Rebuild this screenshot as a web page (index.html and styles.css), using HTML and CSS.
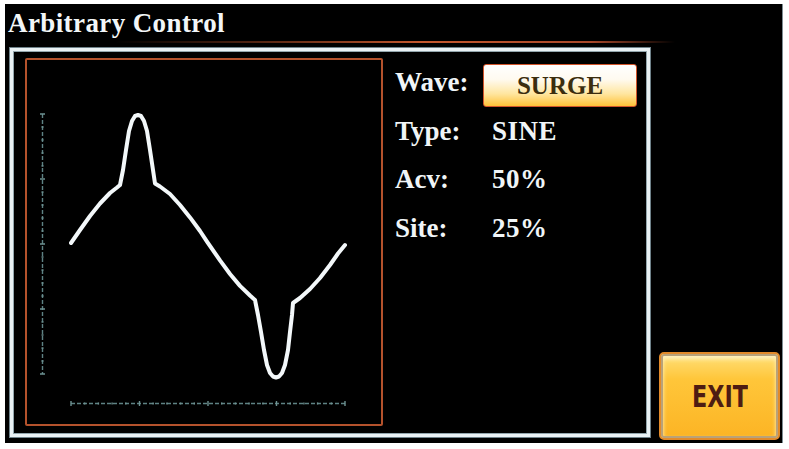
FILE: index.html
```html
<!DOCTYPE html>
<html>
<head>
<meta charset="utf-8">
<link rel="stylesheet" href="styles.css">
</head>
<body>
<div class="screen">
  <div class="title">Arbitrary Control</div>
  <div class="rule"></div>
  <div class="main">
    <div class="frame">
      <div class="graph">
        <svg class="plot" width="354" height="364" viewBox="27 60 354 364">
          <line x1="42.5" y1="114" x2="42.5" y2="374" class="axis" />
          <path class="ticks" d="M40,114h5M41.5,127h2M41.5,140h2M41.5,153h2M41.5,166h2M40,179h5M41.5,192h2M41.5,205h2M41.5,218h2M41.5,231h2M40,244h5M41.5,257h2M41.5,270h2M41.5,283h2M41.5,296h2M40,309h5M41.5,322h2M41.5,335h2M41.5,348h2M41.5,361h2M40,374h5" />
          <line x1="71" y1="403.5" x2="345" y2="403.5" class="axis" />
          <path class="ticks" d="M71,401v5M84.7,402.5v2M98.4,402.5v2M112.1,402.5v2M125.8,402.5v2M139.5,401v5M153.2,402.5v2M166.9,402.5v2M180.6,402.5v2M194.3,402.5v2M208,401v5M221.7,402.5v2M235.4,402.5v2M249.1,402.5v2M262.8,402.5v2M276.5,401v5M290.2,402.5v2M303.9,402.5v2M317.6,402.5v2M331.3,402.5v2M345,401v5" />
          <polyline class="wave" points="71,243 80,230 90,216 100,203.5 110,193 117,187.5 120,185 123,170 126,150 129,131 132,121 135,116 138,115 141,116 144,121 147,131 150,150 153,170 155,183.5 160,186.5 170,194 180,205 190,217.4 200,231 207,241.6 220,260.4 230,274 240,285.9 250,295.5 255,300 258,315 261,332 264,350 267,365 270,373 273,376.5 276,377.5 279,376.5 282,373 285,365 288,350 290,332 292,315 293,303 300,298 310,289 320,278 330,265 338,253.5 345,245" />
        </svg>
      </div>
      <div class="info">
        <div class="label">Wave:</div>
        <div class="btn-wave">SURGE</div>
        <div class="label">Type:</div>
        <div class="value">SINE</div>
        <div class="label">Acv:</div>
        <div class="value">50%</div>
        <div class="label">Site:</div>
        <div class="value">25%</div>
      </div>
    </div>
    <div class="exit"><span class="exit-text">EXIT</span></div>
  </div>
</div>
</body>
</html>
```
FILE: styles.css
```css
html, body {
  margin: 0;
  padding: 0;
  background: #ffffff;
}
.screen {
  margin: 4px 0 0 5px;
  width: 778px;
  height: 439px;
  background: #000000;
  box-sizing: border-box;
  border-right: 1px solid #7d8d93;
  display: flex;
  flex-direction: column;
}
.title {
  margin-top: 4px;
  padding-left: 3px;
  height: 30px;
  line-height: 30px;
  font-family: "Liberation Serif", serif;
  font-weight: bold;
  font-size: 27px;
  letter-spacing: 0.4px;
  color: #f2f6f8;
}
.rule {
  margin: 3px 0 0 110px;
  width: 560px;
  height: 2px;
  background: linear-gradient(90deg, rgba(180,80,40,0) 0%, rgba(180,80,40,0.45) 25%, #c4582e 55%, #a8482a 85%, rgba(160,70,40,0) 100%);
}
.main {
  margin-top: 5px;
  display: flex;
  align-items: flex-end;
  height: 392px;
}
.frame {
  margin-left: 5px;
  margin-bottom: 3px;
  width: 640px;
  height: 389px;
  box-sizing: border-box;
  border: 3px solid #e9f1f4;
  box-shadow: 0 0 0 1px #6f828a, inset 0 0 0 1px #93a6ad;
  padding: 7px 0 0 12px;
  display: flex;
  gap: 12px;
}
.graph {
  width: 358px;
  height: 368px;
  box-sizing: border-box;
  border: 2px solid #b4522c;
  border-radius: 2px;
}
.plot {
  display: block;
}
.axis {
  stroke: #5e8284;
  stroke-width: 1.4;
  stroke-dasharray: 4 2;
}
.ticks {
  stroke: #6e9292;
  stroke-width: 1.4;
  fill: none;
}
.wave {
  fill: none;
  stroke: #f3f8fa;
  stroke-width: 4;
  stroke-linejoin: round;
  stroke-linecap: round;
}
.info {
  display: grid;
  grid-template-columns: 88px 154px;
  grid-auto-rows: 48.7px;
  align-content: start;
  font-family: "Liberation Serif", serif;
  font-weight: bold;
  font-size: 27px;
  color: #f0f5f7;
}
.label, .value {
  line-height: 48.7px;
  white-space: nowrap;
}
.value {
  padding-left: 9px;
  letter-spacing: 0.5px;
}
.btn-wave {
  margin-top: 6px;
  height: 43px;
  box-sizing: border-box;
  border: 1.5px solid #d2542a;
  border-radius: 3px;
  background: linear-gradient(180deg, #ffffff 0%, #fffaf0 35%, #ffe6a0 70%, #ffc238 100%);
  text-align: center;
  line-height: 41px;
  font-size: 25px;
  color: #3b2d0e;
}
.exit {
  margin-left: 9px;
  width: 121px;
  height: 88px;
  box-sizing: border-box;
  border: 2px solid #e28a2a;
  border-radius: 5px;
  box-shadow: inset 0 0 0 2px #b9a27a, inset 0 3px 4px 2px #fff2c0;
  background: linear-gradient(180deg, #ffe07a 0%, #ffc63a 30%, #fcb424 100%);
  display: flex;
  align-items: center;
  justify-content: center;
}
.exit-text {
  display: inline-block;
  transform: scaleX(0.8);
  font-family: "DejaVu Sans Condensed", "Liberation Sans", sans-serif;
  font-weight: bold;
  font-size: 31px;
  color: #4e1c12;
}
```
